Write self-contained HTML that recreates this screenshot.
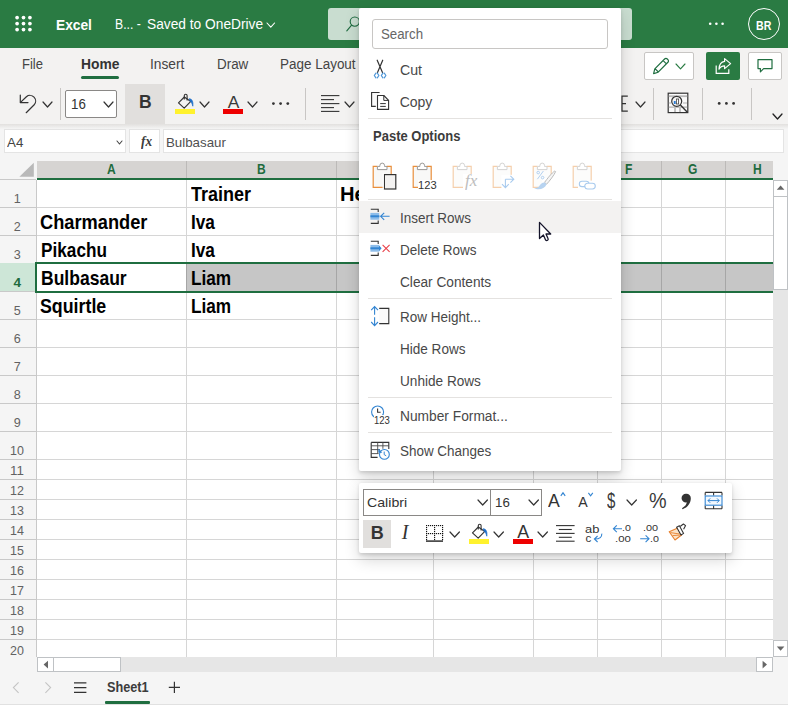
<!DOCTYPE html>
<html lang="en"><head><meta charset="utf-8"><title>Excel</title>
<style>
html,body{margin:0;padding:0}
body{width:788px;height:705px;overflow:hidden;position:relative;background:#f3f2f1;font-family:"Liberation Sans",sans-serif}
div,svg,span.t,b.t,i.t{position:absolute}
.t{white-space:pre;margin:0;padding:0;transform-origin:0 50%}
svg{overflow:visible}
</style></head><body>
<div style="left:0px;top:0px;width:788px;height:48px;background:#2a7b43"></div>
<svg style="left:0px;top:0px;" width="48" height="48" viewBox="0 0 48 48"><circle cx="17.1" cy="17.6" r="1.85" fill="#fff"/><circle cx="23.5" cy="17.6" r="1.85" fill="#fff"/><circle cx="29.9" cy="17.6" r="1.85" fill="#fff"/><circle cx="17.1" cy="23.6" r="1.85" fill="#fff"/><circle cx="23.5" cy="23.6" r="1.85" fill="#fff"/><circle cx="29.9" cy="23.6" r="1.85" fill="#fff"/><circle cx="17.1" cy="29.6" r="1.85" fill="#fff"/><circle cx="23.5" cy="29.6" r="1.85" fill="#fff"/><circle cx="29.9" cy="29.6" r="1.85" fill="#fff"/></svg>
<span class="t" style="left:55.89px;top:16px;font-size:15.5px;line-height:17px;color:#fff;transform:scaleX(0.8868);font-weight:700;">Excel</span>
<span class="t" style="left:115.39px;top:16px;font-size:14px;line-height:16px;color:#fff;transform:scaleX(0.8727);">B... -</span>
<span class="t" style="left:147.11px;top:16px;font-size:14px;line-height:16px;color:#fff;transform:scaleX(0.9814);">Saved to OneDrive</span>
<svg style="left:266.4px;top:21.7px;" width="9.6" height="6.2" viewBox="0 0 9.6 6.2"><polyline points="1,1 4.8,5.2 8.6,1" fill="none" stroke="#fff" stroke-width="1.1" stroke-linecap="round" stroke-linejoin="round"/></svg>
<div style="left:328px;top:8px;width:304px;height:32px;background:#c9ddd0;border-radius:3px"></div>
<svg style="left:344px;top:14px;" width="18" height="20" viewBox="0 0 18 20"><circle cx="10.8" cy="7.6" r="4.6" fill="none" stroke="#1e6b40" stroke-width="1.15"/><line x1="7.6" y1="11.2" x2="2.8" y2="16.8" stroke="#1e6b40" stroke-width="1.15" stroke-linecap="round"/></svg>
<svg style="left:700px;top:16px;" width="32" height="16" viewBox="0 0 32 16"><circle cx="10.2" cy="7.8" r="1.3" fill="#fff"/><circle cx="16.4" cy="7.8" r="1.3" fill="#fff"/><circle cx="22.6" cy="7.8" r="1.3" fill="#fff"/></svg>
<div style="left:748px;top:8px;width:32px;height:32px;border:1px solid #fff;border-radius:50%;box-sizing:border-box"></div>
<span class="t" style="left:756.48px;top:19px;font-size:12.6px;line-height:14px;color:#fff;transform:scaleX(0.8436);font-weight:700;">BR</span>
<div style="left:0px;top:48px;width:788px;height:76px;background:#f3f2f1"></div>
<span class="t" style="left:22.15px;top:56px;font-size:14px;line-height:16px;color:#444;transform:scaleX(0.9307);">File</span>
<span class="t" style="left:80.79px;top:56px;font-size:14px;line-height:16px;color:#333;transform:scaleX(0.9880);font-weight:700;">Home</span>
<span class="t" style="left:150.31px;top:56px;font-size:14px;line-height:16px;color:#444;transform:scaleX(0.9824);">Insert</span>
<span class="t" style="left:216.83px;top:56px;font-size:14px;line-height:16px;color:#444;transform:scaleX(0.9580);">Draw</span>
<span class="t" style="left:280.13px;top:56px;font-size:14px;line-height:16px;color:#444;transform:scaleX(0.9615);">Page Layout</span>
<div style="left:81px;top:76px;width:38px;height:3px;background:#1f6e40;border-radius:1.5px"></div>
<div style="left:644px;top:52px;width:50px;height:28px;background:#fff;border:1px solid #c8c6c4;border-radius:2px;box-sizing:border-box"></div>
<svg style="left:651px;top:56px;" width="20" height="20" viewBox="0 0 20 20"><path d="M2.6 17.6 L3.8 12.8 L13.6 3 a1.9 1.9 0 0 1 2.7 0 l0.6 0.6 a1.9 1.9 0 0 1 0 2.7 L7.2 16.2 Z M12.2 4.6 l3.2 3.2 M4 12.6 L7.4 16" fill="none" stroke="#1f6e40" stroke-width="1.2" stroke-linejoin="round"/></svg>
<svg style="left:674.9px;top:63.1px;" width="11" height="6.8" viewBox="0 0 11 6.8"><polyline points="1,1 5.5,5.8 10,1" fill="none" stroke="#2a7b43" stroke-width="1.1" stroke-linecap="round" stroke-linejoin="round"/></svg>
<div style="left:706px;top:52px;width:34px;height:28px;background:#2a7b43;border-radius:2px"></div>
<svg style="left:713px;top:56px;" width="20" height="20" viewBox="0 0 20 20"><path d="M3.2 9.4 V17.4 H15.8 V13.2" fill="none" stroke="#fff" stroke-width="1.2" stroke-linejoin="miter"/><path d="M11.6 2.6 L17.6 7.6 L11.6 12.6 V9.8 C9 9.8 7.2 10.8 6 13.2 C6.2 8.8 8.2 5.8 11.6 5.4 Z" fill="none" stroke="#fff" stroke-width="1.2" stroke-linejoin="round"/></svg>
<div style="left:748px;top:52px;width:34px;height:28px;background:#fff;border:1px solid #c8c6c4;border-radius:2px;box-sizing:border-box"></div>
<svg style="left:755px;top:56px;" width="20" height="20" viewBox="0 0 20 20"><path d="M3 3.6 H17 V12.6 H8.6 L5.4 15.8 V12.6 H3 Z" fill="none" stroke="#1f6e40" stroke-width="1.2" stroke-linejoin="round"/></svg>
<svg style="left:14px;top:88px;" width="26" height="28" viewBox="0 0 26 28"><path d="M6.3 7 V14.6 H14" fill="none" stroke="#333" stroke-width="1.2" stroke-linecap="round" stroke-linejoin="round"/><path d="M6.5 14.4 L12.4 8.8 A5.6 5.6 0 0 1 20.2 16.8 L12.2 24.7" fill="none" stroke="#333" stroke-width="1.2" stroke-linecap="round" stroke-linejoin="round"/></svg>
<svg style="left:42px;top:101px;" width="11" height="7" viewBox="0 0 11 7"><polyline points="1,1 5.5,6 10,1" fill="none" stroke="#333" stroke-width="1.2" stroke-linecap="round" stroke-linejoin="round"/></svg>
<div style="left:60px;top:88px;width:1px;height:32px;background:#c8c6c4"></div>
<div style="left:65px;top:90px;width:52px;height:28px;background:#fff;border:1px solid #8a8886;border-radius:2px;box-sizing:border-box"></div>
<span class="t" style="left:70.53px;top:96px;font-size:14px;line-height:16px;color:#333;transform:scaleX(0.9501);">16</span>
<svg style="left:102.7px;top:101.3px;" width="11" height="7" viewBox="0 0 11 7"><polyline points="1,1 5.5,6 10,1" fill="none" stroke="#333" stroke-width="1.2" stroke-linecap="round" stroke-linejoin="round"/></svg>
<div style="left:125px;top:84px;width:40px;height:40px;background:#e1dfdd"></div>
<span class="t" style="left:138.88px;top:92px;font-size:17.5px;line-height:20px;color:#333;font-weight:700;">B</span>
<svg style="left:175.6px;top:92px;" width="20" height="18" viewBox="0 0 20 18"><path d="M8.3 5 L2.5 10.8 L8.2 16.2 L14.8 9.4 Z" fill="none" stroke="#333" stroke-width="1.15" stroke-linejoin="round"/><path d="M8.3 7.4 V3.6 a1.4 1.4 0 0 1 2.8 0 V8.6" fill="none" stroke="#333" stroke-width="1.1"/><path d="M13 6.8 C16.2 6.6 17.4 10 16.8 14.2 C16.2 11.8 15.6 10.6 14.2 9.2 Z" fill="#1e6fc8" stroke="#1e6fc8" stroke-width="0.7" stroke-linejoin="round"/></svg>
<div style="left:175px;top:109px;width:20px;height:5px;background:#fff22e"></div>
<svg style="left:199.3px;top:101.3px;" width="11" height="7" viewBox="0 0 11 7"><polyline points="1,1 5.5,6 10,1" fill="none" stroke="#333" stroke-width="1.2" stroke-linecap="round" stroke-linejoin="round"/></svg>
<span class="t" style="left:227.70px;top:92px;font-size:17.4px;line-height:20px;color:#3a3a3a;">A</span>
<div style="left:223px;top:109px;width:20px;height:5px;background:#ee0000"></div>
<svg style="left:247.3px;top:101.3px;" width="11" height="7" viewBox="0 0 11 7"><polyline points="1,1 5.5,6 10,1" fill="none" stroke="#333" stroke-width="1.2" stroke-linecap="round" stroke-linejoin="round"/></svg>
<svg style="left:268px;top:98px;" width="26" height="12" viewBox="0 0 26 12"><circle cx="5.4" cy="5.6" r="1.4" fill="#333"/><circle cx="12.6" cy="5.6" r="1.4" fill="#333"/><circle cx="19.8" cy="5.6" r="1.4" fill="#333"/></svg>
<div style="left:305px;top:88px;width:1px;height:32px;background:#c8c6c4"></div>
<svg style="left:320.6px;top:95px;" width="19" height="18" viewBox="0 0 19 18"><line x1="0" y1="0.6" x2="18.4" y2="0.6" stroke="#333" stroke-width="1.1"/><line x1="0" y1="4.6" x2="13" y2="4.6" stroke="#333" stroke-width="1.1"/><line x1="0" y1="8.6" x2="18.4" y2="8.6" stroke="#333" stroke-width="1.1"/><line x1="0" y1="12.6" x2="13" y2="12.6" stroke="#333" stroke-width="1.1"/><line x1="0" y1="16.4" x2="18.4" y2="16.4" stroke="#333" stroke-width="1.1"/></svg>
<svg style="left:343.9px;top:101.3px;" width="11" height="7" viewBox="0 0 11 7"><polyline points="1,1 5.5,6 10,1" fill="none" stroke="#333" stroke-width="1.2" stroke-linecap="round" stroke-linejoin="round"/></svg>
<svg style="left:620px;top:94px;" width="10" height="20" viewBox="0 0 10 20"><path d="M7.8 2.2 H2 V17.2 H7.8 M2 9.7 H6" fill="none" stroke="#333" stroke-width="1.2"/></svg>
<svg style="left:635.3px;top:101.3px;" width="11" height="7" viewBox="0 0 11 7"><polyline points="1,1 5.5,6 10,1" fill="none" stroke="#333" stroke-width="1.2" stroke-linecap="round" stroke-linejoin="round"/></svg>
<div style="left:653px;top:88px;width:1px;height:32px;background:#c8c6c4"></div>
<svg style="left:667px;top:92px;" width="22" height="22" viewBox="0 0 22 22"><rect x="1.2" y="1.2" width="19.6" height="19.4" fill="#fafafa" stroke="#333" stroke-width="1.2"/><path d="M1.8 4.2 H20.2" stroke="#b8b8b8" stroke-width="1.8"/><path d="M1.8 15.2 H20.2 M1.8 11 H4 M16 11 H20" stroke="#b0b0b0" stroke-width="1.2"/><path d="M8 16 V20 M13 16 V20" stroke="#8a8a8a" stroke-width="1"/><circle cx="9.7" cy="9.3" r="5" fill="#f6f6f6" stroke="#333" stroke-width="1.2"/><rect x="6.8" y="9" width="1.9" height="3" fill="#2b7cd3"/><rect x="9.4" y="7" width="2.2" height="5" fill="#fff" stroke="#444" stroke-width="0.8"/><line x1="13.4" y1="13" x2="20.6" y2="20.6" stroke="#333" stroke-width="1.4"/></svg>
<div style="left:702px;top:88px;width:1px;height:32px;background:#c8c6c4"></div>
<svg style="left:713px;top:98px;" width="26" height="12" viewBox="0 0 26 12"><circle cx="6.2" cy="5.4" r="1.4" fill="#333"/><circle cx="13.4" cy="5.4" r="1.4" fill="#333"/><circle cx="20.6" cy="5.4" r="1.4" fill="#333"/></svg>
<div style="left:751px;top:88px;width:1px;height:32px;background:#c8c6c4"></div>
<svg style="left:771.9px;top:113px;" width="11" height="7" viewBox="0 0 11 7"><polyline points="1,1 5.5,6 10,1" fill="none" stroke="#222" stroke-width="1.3" stroke-linecap="round" stroke-linejoin="round"/></svg>
<div style="left:0px;top:124px;width:788px;height:37px;background:#f5f5f5"></div>
<div style="left:0px;top:124px;width:788px;height:5px;background:linear-gradient(#e2e0de,#f5f5f5)"></div>
<div style="left:4px;top:129px;width:122px;height:24px;background:#fff;border:1px solid #e4e4e4;box-sizing:border-box"></div>
<span class="t" style="left:6.73px;top:135px;font-size:13px;line-height:15px;color:#444;transform:scaleX(1.0248);">A4</span>
<svg style="left:116.3px;top:139.5px;" width="7" height="5" viewBox="0 0 7 5"><polyline points="1,1 3.5,4 6,1" fill="none" stroke="#444" stroke-width="1.1" stroke-linecap="round" stroke-linejoin="round"/></svg>
<div style="left:129px;top:129px;width:31px;height:24px;background:#fff;border:1px solid #e4e4e4;box-sizing:border-box"></div>
<span class="t" style="left:140.60px;top:133px;font-size:14.4px;line-height:16px;color:#3c3c3c;transform:scaleX(0.9220);font-weight:700;font-style:italic;font-family:'Liberation Serif', serif;">fx</span>
<div style="left:163px;top:129px;width:621px;height:24px;background:#fff;border:1px solid #e4e4e4;box-sizing:border-box"></div>
<span class="t" style="left:165.93px;top:135px;font-size:13px;line-height:15px;color:#505050;transform:scaleX(1.0231);">Bulbasaur</span>
<div style="left:37px;top:180px;width:736px;height:477px;background:#fff"></div>
<div style="left:0px;top:161px;width:37px;height:496px;background:#f5f5f5"></div>
<div style="left:36px;top:180px;width:1px;height:477px;background:#c9c9c9"></div>
<div style="left:0px;top:179px;width:36px;height:1px;background:#c9c9c9"></div>
<div style="left:37px;top:161px;width:736px;height:17px;background:#d6d4d2"></div>
<div style="left:37px;top:178px;width:736px;height:2px;background:#1f6e40"></div>
<svg style="left:19px;top:162px;" width="16" height="16" viewBox="0 0 16 16"><path d="M14.8 0.8 V14.8 H0.4 Z" fill="#b9b9b9"/></svg>
<div style="left:186px;top:161px;width:1px;height:17px;background:#bcbab8"></div>
<div style="left:336px;top:161px;width:1px;height:17px;background:#bcbab8"></div>
<div style="left:433px;top:161px;width:1px;height:17px;background:#bcbab8"></div>
<div style="left:533px;top:161px;width:1px;height:17px;background:#bcbab8"></div>
<div style="left:597px;top:161px;width:1px;height:17px;background:#bcbab8"></div>
<div style="left:661px;top:161px;width:1px;height:17px;background:#bcbab8"></div>
<div style="left:725px;top:161px;width:1px;height:17px;background:#bcbab8"></div>
<span class="t" style="left:107.15px;top:161px;font-size:14px;line-height:16px;color:#1e6b3e;transform:scaleX(0.8600);font-weight:700;">A</span>
<span class="t" style="left:256.65px;top:161px;font-size:14px;line-height:16px;color:#1e6b3e;transform:scaleX(0.8600);font-weight:700;">B</span>
<span class="t" style="left:380.15px;top:161px;font-size:14px;line-height:16px;color:#1e6b3e;transform:scaleX(0.8600);font-weight:700;">C</span>
<span class="t" style="left:478.65px;top:161px;font-size:14px;line-height:16px;color:#1e6b3e;transform:scaleX(0.8600);font-weight:700;">D</span>
<span class="t" style="left:560.98px;top:161px;font-size:14px;line-height:16px;color:#1e6b3e;transform:scaleX(0.8600);font-weight:700;">E</span>
<span class="t" style="left:625.32px;top:161px;font-size:14px;line-height:16px;color:#1e6b3e;transform:scaleX(0.8600);font-weight:700;">F</span>
<span class="t" style="left:688.32px;top:161px;font-size:14px;line-height:16px;color:#1e6b3e;transform:scaleX(0.8600);font-weight:700;">G</span>
<span class="t" style="left:752.85px;top:161px;font-size:14px;line-height:16px;color:#1e6b3e;transform:scaleX(0.8600);font-weight:700;">H</span>
<div style="left:187px;top:264px;width:586px;height:27px;background:#c6c6c6"></div>
<div style="left:0px;top:207px;width:36px;height:1px;background:#c9c9c9"></div>
<div style="left:37px;top:207px;width:736px;height:1px;background:#d6d6d6"></div>
<div style="left:0px;top:235px;width:36px;height:1px;background:#c9c9c9"></div>
<div style="left:37px;top:235px;width:736px;height:1px;background:#d6d6d6"></div>
<div style="left:0px;top:263px;width:36px;height:1px;background:#c9c9c9"></div>
<div style="left:37px;top:263px;width:736px;height:1px;background:#d6d6d6"></div>
<div style="left:0px;top:291px;width:36px;height:1px;background:#c9c9c9"></div>
<div style="left:37px;top:291px;width:736px;height:1px;background:#d6d6d6"></div>
<div style="left:0px;top:319px;width:36px;height:1px;background:#c9c9c9"></div>
<div style="left:37px;top:319px;width:736px;height:1px;background:#d6d6d6"></div>
<div style="left:0px;top:347px;width:36px;height:1px;background:#c9c9c9"></div>
<div style="left:37px;top:347px;width:736px;height:1px;background:#d6d6d6"></div>
<div style="left:0px;top:375px;width:36px;height:1px;background:#c9c9c9"></div>
<div style="left:37px;top:375px;width:736px;height:1px;background:#d6d6d6"></div>
<div style="left:0px;top:403px;width:36px;height:1px;background:#c9c9c9"></div>
<div style="left:37px;top:403px;width:736px;height:1px;background:#d6d6d6"></div>
<div style="left:0px;top:431px;width:36px;height:1px;background:#c9c9c9"></div>
<div style="left:37px;top:431px;width:736px;height:1px;background:#d6d6d6"></div>
<div style="left:0px;top:459px;width:36px;height:1px;background:#c9c9c9"></div>
<div style="left:37px;top:459px;width:736px;height:1px;background:#d6d6d6"></div>
<div style="left:0px;top:479px;width:36px;height:1px;background:#c9c9c9"></div>
<div style="left:37px;top:479px;width:736px;height:1px;background:#d6d6d6"></div>
<div style="left:0px;top:499px;width:36px;height:1px;background:#c9c9c9"></div>
<div style="left:37px;top:499px;width:736px;height:1px;background:#d6d6d6"></div>
<div style="left:0px;top:519px;width:36px;height:1px;background:#c9c9c9"></div>
<div style="left:37px;top:519px;width:736px;height:1px;background:#d6d6d6"></div>
<div style="left:0px;top:539px;width:36px;height:1px;background:#c9c9c9"></div>
<div style="left:37px;top:539px;width:736px;height:1px;background:#d6d6d6"></div>
<div style="left:0px;top:559px;width:36px;height:1px;background:#c9c9c9"></div>
<div style="left:37px;top:559px;width:736px;height:1px;background:#d6d6d6"></div>
<div style="left:0px;top:579px;width:36px;height:1px;background:#c9c9c9"></div>
<div style="left:37px;top:579px;width:736px;height:1px;background:#d6d6d6"></div>
<div style="left:0px;top:599px;width:36px;height:1px;background:#c9c9c9"></div>
<div style="left:37px;top:599px;width:736px;height:1px;background:#d6d6d6"></div>
<div style="left:0px;top:619px;width:36px;height:1px;background:#c9c9c9"></div>
<div style="left:37px;top:619px;width:736px;height:1px;background:#d6d6d6"></div>
<div style="left:0px;top:639px;width:36px;height:1px;background:#c9c9c9"></div>
<div style="left:37px;top:639px;width:736px;height:1px;background:#d6d6d6"></div>
<div style="left:186px;top:180px;width:1px;height:477px;background:#d6d6d6"></div>
<div style="left:186px;top:264px;width:1px;height:27px;background:#a6a6a6"></div>
<div style="left:336px;top:180px;width:1px;height:477px;background:#d6d6d6"></div>
<div style="left:336px;top:264px;width:1px;height:27px;background:#a6a6a6"></div>
<div style="left:433px;top:180px;width:1px;height:477px;background:#d6d6d6"></div>
<div style="left:433px;top:264px;width:1px;height:27px;background:#a6a6a6"></div>
<div style="left:533px;top:180px;width:1px;height:477px;background:#d6d6d6"></div>
<div style="left:533px;top:264px;width:1px;height:27px;background:#a6a6a6"></div>
<div style="left:597px;top:180px;width:1px;height:477px;background:#d6d6d6"></div>
<div style="left:597px;top:264px;width:1px;height:27px;background:#a6a6a6"></div>
<div style="left:661px;top:180px;width:1px;height:477px;background:#d6d6d6"></div>
<div style="left:661px;top:264px;width:1px;height:27px;background:#a6a6a6"></div>
<div style="left:725px;top:180px;width:1px;height:477px;background:#d6d6d6"></div>
<div style="left:725px;top:264px;width:1px;height:27px;background:#a6a6a6"></div>
<div style="left:0px;top:263px;width:35px;height:28px;background:#cde6d7"></div>
<span class="t" style="left:13.79px;top:192px;font-size:12.6px;line-height:14px;color:#626262;">1</span>
<span class="t" style="left:13.79px;top:220px;font-size:12.6px;line-height:14px;color:#626262;">2</span>
<span class="t" style="left:13.79px;top:248px;font-size:12.6px;line-height:14px;color:#626262;">3</span>
<span class="t" style="left:13.42px;top:275px;font-size:13.6px;line-height:15px;color:#1e6b3e;font-weight:700;">4</span>
<span class="t" style="left:13.79px;top:304px;font-size:12.6px;line-height:14px;color:#626262;">5</span>
<span class="t" style="left:13.79px;top:332px;font-size:12.6px;line-height:14px;color:#626262;">6</span>
<span class="t" style="left:13.79px;top:360px;font-size:12.6px;line-height:14px;color:#626262;">7</span>
<span class="t" style="left:13.79px;top:388px;font-size:12.6px;line-height:14px;color:#626262;">8</span>
<span class="t" style="left:13.79px;top:416px;font-size:12.6px;line-height:14px;color:#626262;">9</span>
<span class="t" style="left:10.38px;top:444px;font-size:12.6px;line-height:14px;color:#626262;transform:scaleX(0.9889);">10</span>
<span class="t" style="left:10.33px;top:464px;font-size:12.6px;line-height:14px;color:#626262;transform:scaleX(1.0598);">11</span>
<span class="t" style="left:10.38px;top:484px;font-size:12.6px;line-height:14px;color:#626262;transform:scaleX(0.9889);">12</span>
<span class="t" style="left:10.38px;top:504px;font-size:12.6px;line-height:14px;color:#626262;transform:scaleX(0.9889);">13</span>
<span class="t" style="left:10.38px;top:524px;font-size:12.6px;line-height:14px;color:#626262;transform:scaleX(0.9889);">14</span>
<span class="t" style="left:10.38px;top:544px;font-size:12.6px;line-height:14px;color:#626262;transform:scaleX(0.9889);">15</span>
<span class="t" style="left:10.38px;top:564px;font-size:12.6px;line-height:14px;color:#626262;transform:scaleX(0.9889);">16</span>
<span class="t" style="left:10.38px;top:584px;font-size:12.6px;line-height:14px;color:#626262;transform:scaleX(0.9889);">17</span>
<span class="t" style="left:10.38px;top:604px;font-size:12.6px;line-height:14px;color:#626262;transform:scaleX(0.9889);">18</span>
<span class="t" style="left:10.38px;top:624px;font-size:12.6px;line-height:14px;color:#626262;transform:scaleX(0.9889);">19</span>
<span class="t" style="left:10.38px;top:644px;font-size:12.6px;line-height:14px;color:#626262;transform:scaleX(0.9889);">20</span>
<span class="t" style="left:191.06px;top:184px;font-size:19.3px;line-height:21px;color:#000;transform:scaleX(0.9323);font-weight:700;">Trainer</span>
<span class="t" style="left:340.00px;top:184px;font-size:19.3px;line-height:21px;color:#000;transform:scaleX(1.0429);font-weight:700;">Height</span>
<span class="t" style="left:40.35px;top:212px;font-size:19.3px;line-height:21px;color:#000;transform:scaleX(0.9460);font-weight:700;">Charmander</span>
<span class="t" style="left:190.88px;top:212px;font-size:19.3px;line-height:21px;color:#000;transform:scaleX(0.8935);font-weight:700;">Iva</span>
<span class="t" style="left:40.68px;top:240px;font-size:19.3px;line-height:21px;color:#000;transform:scaleX(0.8919);font-weight:700;">Pikachu</span>
<span class="t" style="left:190.88px;top:240px;font-size:19.3px;line-height:21px;color:#000;transform:scaleX(0.8935);font-weight:700;">Iva</span>
<span class="t" style="left:40.77px;top:268px;font-size:19.3px;line-height:21px;color:#000;transform:scaleX(0.9084);font-weight:700;">Bulbasaur</span>
<span class="t" style="left:190.88px;top:268px;font-size:19.3px;line-height:21px;color:#000;transform:scaleX(0.8921);font-weight:700;">Liam</span>
<span class="t" style="left:40.37px;top:296px;font-size:19.3px;line-height:21px;color:#000;transform:scaleX(0.9231);font-weight:700;">Squirtle</span>
<span class="t" style="left:190.88px;top:296px;font-size:19.3px;line-height:21px;color:#000;transform:scaleX(0.8921);font-weight:700;">Liam</span>
<div style="left:35px;top:262px;width:755px;height:31px;border:2px solid #1f6e40;box-sizing:border-box"></div>
<div style="left:773px;top:161px;width:15px;height:19px;background:#f5f5f5"></div>
<div style="left:773px;top:180px;width:15px;height:477px;background:#e6e6e6"></div>
<div style="left:773px;top:180px;width:15px;height:17px;background:#fff;border:1px solid #bfc2c5;box-sizing:border-box"></div>
<svg style="left:773px;top:180px;" width="15" height="17" viewBox="0 0 15 17"><path d="M3.8 9.8 L7.6 5.6 L11.4 9.8 Z" fill="#666"/></svg>
<div style="left:773px;top:196px;width:15px;height:94px;background:#fff;border:1px solid #bfc2c5;box-sizing:border-box"></div>
<div style="left:773px;top:640px;width:15px;height:17px;background:#fff;border:1px solid #bfc2c5;box-sizing:border-box"></div>
<svg style="left:773px;top:640px;" width="15" height="17" viewBox="0 0 15 17"><path d="M3.8 6.6 L11.4 6.6 L7.6 10.8 Z" fill="#666"/></svg>
<div style="left:0px;top:657px;width:788px;height:15px;background:#f5f5f5"></div>
<div style="left:37px;top:657px;width:720px;height:15px;background:#e6e6e6"></div>
<div style="left:37px;top:657px;width:17px;height:15px;background:#fff;border:1px solid #bfc2c5;box-sizing:border-box"></div>
<svg style="left:37px;top:657px;" width="17" height="15" viewBox="0 0 17 15"><path d="M11 3.8 L11 11.4 L6.6 7.6 Z" fill="#666"/></svg>
<div style="left:53px;top:657px;width:68px;height:15px;background:#fff;border:1px solid #bfc2c5;box-sizing:border-box"></div>
<div style="left:756px;top:657px;width:17px;height:15px;background:#fff;border:1px solid #bfc2c5;box-sizing:border-box"></div>
<svg style="left:756px;top:657px;" width="17" height="15" viewBox="0 0 17 15"><path d="M6.6 3.8 L6.6 11.4 L11 7.6 Z" fill="#666"/></svg>
<div style="left:0px;top:672px;width:788px;height:33px;background:#f5f5f5"></div>
<div style="left:0px;top:704px;width:788px;height:1px;background:#e1e1e1"></div>
<svg style="left:10px;top:680px;" width="12" height="16" viewBox="0 0 12 16"><polyline points="8.6,2.4 3.4,7.6 8.6,12.8" fill="none" stroke="#c4c4c4" stroke-width="1.1"/></svg>
<svg style="left:42px;top:680px;" width="12" height="16" viewBox="0 0 12 16"><polyline points="3.4,2.4 8.6,7.6 3.4,12.8" fill="none" stroke="#c4c4c4" stroke-width="1.1"/></svg>
<svg style="left:73px;top:681px;" width="14" height="13" viewBox="0 0 14 13"><path d="M1 1.8 H13.4 M1 6.6 H13.4 M1 11.4 H13.4" stroke="#333" stroke-width="1.2" fill="none"/></svg>
<span class="t" style="left:107.22px;top:679px;font-size:14px;line-height:16px;color:#3c3c3c;transform:scaleX(0.9068);font-weight:700;">Sheet1</span>
<svg style="left:168px;top:681px;" width="13" height="13" viewBox="0 0 13 13"><path d="M6.4 0.8 V12 M0.8 6.4 H12" stroke="#333" stroke-width="1.2" fill="none"/></svg>
<div style="left:105px;top:701px;width:45px;height:3px;background:#1f6e40;border-radius:1px"></div>
<div style="left:359px;top:8px;width:262px;height:462.8px;background:#fff;border-radius:2px;box-shadow:0 6.4px 14.4px rgba(0,0,0,.16),0 1.2px 3.6px rgba(0,0,0,.13)"></div>
<div style="left:372px;top:19px;width:236px;height:29.5px;background:#fff;border:1px solid #c8c6c4;border-radius:3px;box-sizing:border-box"></div>
<span class="t" style="left:380.54px;top:26px;font-size:14px;line-height:16px;color:#666;transform:scaleX(0.9468);">Search</span>
<div style="left:359px;top:201px;width:262px;height:31.6px;background:#f3f2f1"></div>
<div style="left:368px;top:118px;width:244px;height:1px;background:#e4e2e0"></div>
<div style="left:368px;top:199px;width:244px;height:1px;background:#e4e2e0"></div>
<div style="left:368px;top:298px;width:244px;height:1px;background:#e4e2e0"></div>
<div style="left:368px;top:397px;width:244px;height:1px;background:#e4e2e0"></div>
<div style="left:368px;top:432px;width:244px;height:1px;background:#e4e2e0"></div>
<svg style="left:372px;top:59px;" width="18" height="21" viewBox="0 0 18 21"><path d="M5.2 1.2 L10.6 13.8 M10.7 1.2 L5.4 13.8" stroke="#333" stroke-width="1.2" fill="none" stroke-linecap="round"/><path d="M3.9 14.2 L2.3 16.5 L3.9 18.8 M5.3 14.2 L6.9 16.5 L5.3 18.8 M10.9 14.2 L9.3 16.5 L10.9 18.8 M12.3 14.2 L13.9 16.5 L12.3 18.8" fill="none" stroke="#4f97d8" stroke-width="1.2" stroke-linejoin="round" stroke-linecap="round"/></svg>
<span class="t" style="left:399.69px;top:62px;font-size:14px;line-height:16px;color:#484848;transform:scaleX(1.0093);">Cut</span>
<svg style="left:370px;top:91px;" width="21" height="20" viewBox="0 0 21 20"><path d="M9.6 1.5 H1.6 V15.4 H5.8" fill="#fafafa" stroke="#333" stroke-width="1.1"/><path d="M7.5 4.5 H13.8 L18.6 9.4 V18.4 H7.5 Z" fill="#fff" stroke="#333" stroke-width="1.1" stroke-linejoin="round"/><path d="M13.8 4.5 V9.4 H18.6 M10.2 12.6 H15.8 M10.2 15.4 H15.8" fill="none" stroke="#333" stroke-width="1"/></svg>
<span class="t" style="left:399.70px;top:94px;font-size:14px;line-height:16px;color:#484848;">Copy</span>
<span class="t" style="left:372.51px;top:128px;font-size:14px;line-height:16px;color:#3c3c3c;transform:scaleX(0.9288);font-weight:700;">Paste Options</span>
<svg style="left:372.2px;top:161.6px;" width="28" height="30" viewBox="0 0 28 30"><g opacity="1"><path d="M5.4 4.4 H1.2 V25.4 H19.2 V4.4 H15" fill="#f8f8f7" stroke="#e98f3c" stroke-width="1.2"/><path d="M5.4 7.6 V4.4 H7.9 V3.4 a2.3 2.3 0 0 1 4.6 0 V4.4 H15 V7.6 Z" fill="#fff" stroke="#9a9896" stroke-width="1"/></g></svg>
<svg style="left:372.2px;top:161.6px;" width="28" height="30" viewBox="0 0 28 30"><rect x="12.4" y="12.6" width="11.4" height="14.4" fill="#f3f2f1" stroke="#333" stroke-width="1.2"/><rect x="10.6" y="10.8" width="1.2" height="15.2" fill="#fff"/><rect x="10.6" y="26" width="1.2" height="1.4" fill="#fff"/></svg>
<svg style="left:412.2px;top:161.6px;" width="28" height="30" viewBox="0 0 28 30"><g opacity="1"><path d="M5.4 4.4 H1.2 V25.4 H19.2 V4.4 H15" fill="#f8f8f7" stroke="#e98f3c" stroke-width="1.2"/><path d="M5.4 7.6 V4.4 H7.9 V3.4 a2.3 2.3 0 0 1 4.6 0 V4.4 H15 V7.6 Z" fill="#fff" stroke="#9a9896" stroke-width="1"/></g></svg>
<div style="left:417.6px;top:179.6px;width:19.4px;height:10.8px;background:#fff"></div>
<span class="t" style="left:418.04px;top:180px;font-size:10.4px;line-height:11px;color:#333;transform:scaleX(1.0747);">123</span>
<svg style="left:452.2px;top:161.6px;" width="28" height="30" viewBox="0 0 28 30"><g opacity="0.42"><path d="M5.4 4.4 H1.2 V25.4 H19.2 V4.4 H15" fill="#f8f8f7" stroke="#e98f3c" stroke-width="1.2"/><path d="M5.4 7.6 V4.4 H7.9 V3.4 a2.3 2.3 0 0 1 4.6 0 V4.4 H15 V7.6 Z" fill="#fff" stroke="#9a9896" stroke-width="1"/></g></svg>
<div style="left:463.4px;top:174px;width:14.6px;height:16.4px;background:#fff"></div>
<span class="t" style="left:464.95px;top:171px;font-size:16.6px;line-height:19px;color:#bdbdbd;transform:scaleX(1.0230);font-style:italic;font-family:'Liberation Serif', serif;">fx</span>
<svg style="left:492.2px;top:161.6px;" width="28" height="30" viewBox="0 0 28 30"><g opacity="0.42"><path d="M5.4 4.4 H1.2 V25.4 H19.2 V4.4 H15" fill="#f8f8f7" stroke="#e98f3c" stroke-width="1.2"/><path d="M5.4 7.6 V4.4 H7.9 V3.4 a2.3 2.3 0 0 1 4.6 0 V4.4 H15 V7.6 Z" fill="#fff" stroke="#9a9896" stroke-width="1"/></g></svg>
<svg style="left:492.2px;top:161.6px;" width="30" height="30" viewBox="0 0 30 30"><rect x="9.4" y="12.8" width="14" height="14.6" fill="#fff"/><path d="M13.4 17.2 H21.6 M18.4 13.8 L21.8 17.2 L18.4 20.6 M13.4 17.2 V25.4 M10 22.2 L13.4 25.6 L16.8 22.2" fill="none" stroke="#a9cbee" stroke-width="1.1"/></svg>
<svg style="left:532.2px;top:161.6px;" width="28" height="30" viewBox="0 0 28 30"><g opacity="0.42"><path d="M5.4 4.4 H1.2 V25.4 H19.2 V4.4 H15" fill="#f8f8f7" stroke="#e98f3c" stroke-width="1.2"/><path d="M5.4 7.6 V4.4 H7.9 V3.4 a2.3 2.3 0 0 1 4.6 0 V4.4 H15 V7.6 Z" fill="#fff" stroke="#9a9896" stroke-width="1"/></g></svg>
<svg style="left:532.2px;top:161.6px;" width="32" height="30" viewBox="0 0 32 30"><rect x="10" y="16" width="13" height="12" fill="#fff"/><path d="M22.8 9 C20 10.6 14.8 17.2 12.6 20.4 L14.6 22.2 C17.2 19.4 22.4 12.8 23.6 9.6 Z" fill="#f6f6f6" stroke="#b4b4b4" stroke-width="0.9"/><path d="M12.6 20.4 C10.2 20.2 8.2 22 7 24.4 C5.6 25.8 3.6 26.2 2 26 C5.8 28.4 12.6 27.4 14.6 22.2 Z" fill="#b7d3f0"/><circle cx="6.2" cy="10.6" r="1.3" fill="none" stroke="#a9cbee" stroke-width="0.9"/><circle cx="10.6" cy="15.6" r="1.3" fill="none" stroke="#a9cbee" stroke-width="0.9"/><path d="M11.4 9 L5.4 17.2" stroke="#a9cbee" stroke-width="0.9"/></svg>
<svg style="left:572.2px;top:161.6px;" width="28" height="30" viewBox="0 0 28 30"><g opacity="0.42"><path d="M5.4 4.4 H1.2 V25.4 H19.2 V4.4 H15" fill="#f8f8f7" stroke="#e98f3c" stroke-width="1.2"/><path d="M5.4 7.6 V4.4 H7.9 V3.4 a2.3 2.3 0 0 1 4.6 0 V4.4 H15 V7.6 Z" fill="#fff" stroke="#9a9896" stroke-width="1"/></g></svg>
<svg style="left:572.2px;top:161.6px;" width="32" height="30" viewBox="0 0 32 30"><rect x="6" y="18.6" width="18" height="9.4" fill="#fff"/><path d="M13.2 24.6 H10 a2.7 2.7 0 0 1 0 -5.4 H14.4 a2.7 2.7 0 0 1 2.6 2" fill="none" stroke="#a9cbee" stroke-width="1.1"/><path d="M16.6 21.2 H20.4 a2.9 2.9 0 0 1 0 5.8 H15.6 a2.9 2.9 0 0 1 -2.8 -2.2 a2.9 2.9 0 0 1 2.8 -3.6 Z" fill="none" stroke="#a9cbee" stroke-width="1.1"/></svg>
<svg style="left:370.4px;top:208px;" width="22" height="17" viewBox="0 0 22 17"><path d="M0.8 1.2 H8.2 V4 M0.8 15.4 H8.2 V12.6" fill="none" stroke="#333" stroke-width="1.1"/><rect x="0.4" y="4.9" width="8.8" height="6.8" fill="#8dbdea"/><path d="M0.4 8.3 H9.4" stroke="#3385d2" stroke-width="2"/><path d="M10.6 8.3 H19.6 M14.2 4.8 L10.6 8.3 L14.2 11.8" fill="none" stroke="#3385d2" stroke-width="1.1"/></svg>
<span class="t" style="left:399.73px;top:210px;font-size:14px;line-height:16px;color:#484848;transform:scaleX(0.9605);">Insert Rows</span>
<svg style="left:370.4px;top:240px;" width="22" height="17" viewBox="0 0 22 17"><path d="M0.8 1.2 H8.2 V4 M0.8 15.4 H8.2 V12.6" fill="none" stroke="#333" stroke-width="1.1"/><rect x="0.4" y="4.9" width="8.8" height="6.8" fill="#8dbdea"/><path d="M0.4 8.3 H9.4" stroke="#3385d2" stroke-width="2"/><path d="M9 5.4 L11.6 8.3 L9 11.2 Z" fill="#3385d2"/><path d="M12.6 4.8 L19.6 11.8 M19.6 4.8 L12.6 11.8" fill="none" stroke="#e8414a" stroke-width="1.1"/></svg>
<span class="t" style="left:399.72px;top:242px;font-size:14px;line-height:16px;color:#484848;transform:scaleX(0.9650);">Delete Rows</span>
<span class="t" style="left:399.72px;top:274px;font-size:14px;line-height:16px;color:#484848;transform:scaleX(0.9765);">Clear Contents</span>
<svg style="left:369px;top:304px;" width="22" height="24" viewBox="0 0 22 24"><path d="M10.2 4.4 H19.8 V19.6 H10.2" fill="#fafafa" stroke="#333" stroke-width="1.1"/><path d="M5.6 2.8 V10.8 M5.6 13.2 V21.4 M2.2 6.2 L5.6 2.6 L9 6.2 M2.2 18 L5.6 21.6 L9 18" fill="none" stroke="#3385d2" stroke-width="1.1"/></svg>
<span class="t" style="left:399.73px;top:309px;font-size:14px;line-height:16px;color:#484848;transform:scaleX(0.9637);">Row Height...</span>
<span class="t" style="left:399.72px;top:341px;font-size:14px;line-height:16px;color:#484848;transform:scaleX(0.9675);">Hide Rows</span>
<span class="t" style="left:399.72px;top:373px;font-size:14px;line-height:16px;color:#484848;transform:scaleX(0.9716);">Unhide Rows</span>
<svg style="left:370px;top:404px;" width="22" height="22" viewBox="0 0 22 22"><circle cx="7.6" cy="8" r="6" fill="none" stroke="#3385d2" stroke-width="1.1"/><path d="M7.6 4.6 V8.2 H10.6" fill="none" stroke="#333" stroke-width="1.1"/></svg>
<div style="left:373.6px;top:415.2px;width:16.8px;height:9.4px;background:#fff"></div>
<span class="t" style="left:373.92px;top:414px;font-size:10.6px;line-height:12px;color:#333;transform:scaleX(0.8967);">123</span>
<span class="t" style="left:399.91px;top:408px;font-size:14px;line-height:16px;color:#484848;transform:scaleX(0.9827);">Number Format...</span>
<svg style="left:369px;top:440px;" width="24" height="22" viewBox="0 0 24 22"><path d="M2.2 2.4 H19.8 V9 M2.2 2.4 V17.4 H8.6" fill="none" stroke="#333" stroke-width="1.1"/><path d="M2.2 5.8 H19.8 M2.2 9.6 H11 M2.2 13.6 H9.6 M8.7 2.4 V13.6 M13.9 2.4 V8.8" fill="none" stroke="#4a4a4a" stroke-width="0.9"/><circle cx="15.4" cy="14.4" r="4.9" fill="#fff" stroke="#3385d2" stroke-width="1.1"/><path d="M15.2 11.6 V14.6 L17.2 15.8" fill="none" stroke="#3385d2" stroke-width="1"/><path d="M9.8 9.2 V12.4 H12.6 Z" fill="#3385d2" stroke="#3385d2" stroke-width="0.8" stroke-linejoin="round"/></svg>
<span class="t" style="left:399.93px;top:443px;font-size:14px;line-height:16px;color:#484848;transform:scaleX(0.9605);">Show Changes</span>
<svg style="left:536px;top:220px;" width="16" height="24" viewBox="0 0 16 24"><path d="M3.5 2.4 V18.6 L7.4 15 L9.6 20 Q10.5 20.9 11.6 20.3 Q12.5 19.7 12 18.6 L10 14 H14.7 Z" fill="#fff" stroke="#14142a" stroke-width="1.3" stroke-linejoin="round"/></svg>
<div style="left:359px;top:482.6px;width:372.6px;height:70.2px;background:#fff;border-radius:2px;box-shadow:0 6.4px 14.4px rgba(0,0,0,.16),0 1.2px 3.6px rgba(0,0,0,.13)"></div>
<div style="left:363.4px;top:488.5px;width:127.4px;height:27.1px;background:#fff;border:1px solid #8a8886;box-sizing:border-box"></div>
<div style="left:489.8px;top:488.5px;width:52.2px;height:27.1px;background:#fff;border:1px solid #8a8886;box-sizing:border-box"></div>
<span class="t" style="left:367.49px;top:495px;font-size:13.6px;line-height:15px;color:#333;transform:scaleX(1.0423);">Calibri</span>
<svg style="left:476.6px;top:498.9px;" width="11.4" height="7" viewBox="0 0 11.4 7"><polyline points="1,1 5.7,6 10.4,1" fill="none" stroke="#333" stroke-width="1.2" stroke-linecap="round" stroke-linejoin="round"/></svg>
<span class="t" style="left:495.24px;top:495px;font-size:13.6px;line-height:15px;color:#333;transform:scaleX(0.9759);">16</span>
<svg style="left:527.8px;top:498.9px;" width="11.4" height="7" viewBox="0 0 11.4 7"><polyline points="1,1 5.7,6 10.4,1" fill="none" stroke="#333" stroke-width="1.2" stroke-linecap="round" stroke-linejoin="round"/></svg>
<span class="t" style="left:547.71px;top:490px;font-size:18.6px;line-height:21px;color:#333;transform:scaleX(0.9500);">A</span>
<svg style="left:558.6px;top:490px;" width="9" height="8" viewBox="0 0 9 8"><polyline points="1.8,5.8 4,2.8 6.2,5.8" fill="none" stroke="#3385d2" stroke-width="1.1"/></svg>
<span class="t" style="left:578.17px;top:494px;font-size:14.2px;line-height:16px;color:#333;">A</span>
<svg style="left:586.8px;top:490px;" width="9" height="8" viewBox="0 0 9 8"><polyline points="1.4,2.8 3.6,5.8 5.8,2.8" fill="none" stroke="#3385d2" stroke-width="1.1"/></svg>
<span class="t" style="left:607.24px;top:488px;font-size:22px;line-height:25px;color:#3a3a3a;transform:scaleX(0.6800);">$</span>
<svg style="left:626px;top:499.1px;" width="11.4" height="7" viewBox="0 0 11.4 7"><polyline points="1,1 5.7,6 10.4,1" fill="none" stroke="#333" stroke-width="1.2" stroke-linecap="round" stroke-linejoin="round"/></svg>
<span class="t" style="left:648.80px;top:488px;font-size:22px;line-height:25px;color:#3a3a3a;transform:scaleX(0.9000);">%</span>
<svg style="left:679.8px;top:491.6px;" width="13" height="19.4" viewBox="0 0 12 18"><path d="M5.6 1.6 a4.1 4.1 0 0 1 4.4 4.3 C10 10.4 7.2 14.4 2.4 16 L1.8 15 C4.6 13.6 6.2 11.6 6.2 9.6 A4 4 0 0 1 1.4 5.8 A4.1 4.1 0 0 1 5.6 1.6 Z" fill="#333"/></svg>
<svg style="left:704px;top:491px;" width="20" height="20" viewBox="0 0 20 20"><path d="M1.2 1.4 H18 M1.2 17.8 H18 M1.2 1.4 V4.6 M18 1.4 V4.6 M1.2 17.8 V14.6 M18 17.8 V14.6 M9.6 1.4 V4.6 M9.6 14.6 V17.8" fill="none" stroke="#333" stroke-width="1.1"/><rect x="1.2" y="5" width="16.8" height="9.2" fill="#f2f8fe" stroke="#3385d2" stroke-width="1.1"/><path d="M4 9.6 H15.2 M6.2 7.4 L4 9.6 L6.2 11.8 M13 7.4 L15.2 9.6 L13 11.8" fill="none" stroke="#3385d2" stroke-width="1"/></svg>
<div style="left:363.4px;top:520.2px;width:27.6px;height:27.6px;background:#e1dfdd"></div>
<span class="t" style="left:370.70px;top:523px;font-size:18px;line-height:20px;color:#333;font-weight:700;">B</span>
<span class="t" style="left:401.86px;top:521px;font-size:20px;line-height:22px;color:#333;font-style:italic;font-family:'Liberation Serif', serif;">I</span>
<svg style="left:426px;top:525px;" width="18" height="18" viewBox="0 0 18 18"><rect x="0" y="0" width="1.15" height="1.15" fill="#111"/><rect x="0" y="8" width="1.15" height="1.15" fill="#111"/><rect x="2" y="0" width="1.15" height="1.15" fill="#111"/><rect x="2" y="8" width="1.15" height="1.15" fill="#111"/><rect x="4" y="0" width="1.15" height="1.15" fill="#111"/><rect x="4" y="8" width="1.15" height="1.15" fill="#111"/><rect x="6" y="0" width="1.15" height="1.15" fill="#111"/><rect x="6" y="8" width="1.15" height="1.15" fill="#111"/><rect x="8" y="0" width="1.15" height="1.15" fill="#111"/><rect x="8" y="8" width="1.15" height="1.15" fill="#111"/><rect x="10" y="0" width="1.15" height="1.15" fill="#111"/><rect x="10" y="8" width="1.15" height="1.15" fill="#111"/><rect x="12" y="0" width="1.15" height="1.15" fill="#111"/><rect x="12" y="8" width="1.15" height="1.15" fill="#111"/><rect x="14" y="0" width="1.15" height="1.15" fill="#111"/><rect x="14" y="8" width="1.15" height="1.15" fill="#111"/><rect x="16" y="0" width="1.15" height="1.15" fill="#111"/><rect x="16" y="8" width="1.15" height="1.15" fill="#111"/><rect x="0" y="2" width="1.15" height="1.15" fill="#111"/><rect x="8" y="2" width="1.15" height="1.15" fill="#111"/><rect x="16" y="2" width="1.15" height="1.15" fill="#111"/><rect x="0" y="4" width="1.15" height="1.15" fill="#111"/><rect x="8" y="4" width="1.15" height="1.15" fill="#111"/><rect x="16" y="4" width="1.15" height="1.15" fill="#111"/><rect x="0" y="6" width="1.15" height="1.15" fill="#111"/><rect x="8" y="6" width="1.15" height="1.15" fill="#111"/><rect x="16" y="6" width="1.15" height="1.15" fill="#111"/><rect x="0" y="8" width="1.15" height="1.15" fill="#111"/><rect x="8" y="8" width="1.15" height="1.15" fill="#111"/><rect x="16" y="8" width="1.15" height="1.15" fill="#111"/><rect x="0" y="10" width="1.15" height="1.15" fill="#111"/><rect x="8" y="10" width="1.15" height="1.15" fill="#111"/><rect x="16" y="10" width="1.15" height="1.15" fill="#111"/><rect x="0" y="12" width="1.15" height="1.15" fill="#111"/><rect x="8" y="12" width="1.15" height="1.15" fill="#111"/><rect x="16" y="12" width="1.15" height="1.15" fill="#111"/><rect x="0" y="14" width="1.15" height="1.15" fill="#111"/><rect x="8" y="14" width="1.15" height="1.15" fill="#111"/><rect x="16" y="14" width="1.15" height="1.15" fill="#111"/><rect x="0" y="15.4" width="17" height="1.4" fill="#222"/></svg>
<svg style="left:448.9px;top:531.1px;" width="11.4" height="7" viewBox="0 0 11.4 7"><polyline points="1,1 5.7,6 10.4,1" fill="none" stroke="#333" stroke-width="1.2" stroke-linecap="round" stroke-linejoin="round"/></svg>
<svg style="left:469.6px;top:522px;" width="20" height="18" viewBox="0 0 20 18"><path d="M8.3 5 L2.5 10.8 L8.2 16.2 L14.8 9.4 Z" fill="none" stroke="#333" stroke-width="1.15" stroke-linejoin="round"/><path d="M8.3 7.4 V3.6 a1.4 1.4 0 0 1 2.8 0 V8.6" fill="none" stroke="#333" stroke-width="1.1"/><path d="M13 6.8 C16.2 6.6 17.4 10 16.8 14.2 C16.2 11.8 15.6 10.6 14.2 9.2 Z" fill="#1e6fc8" stroke="#1e6fc8" stroke-width="0.7" stroke-linejoin="round"/></svg>
<div style="left:469.2px;top:539.2px;width:19.6px;height:4.4px;background:#fff22e"></div>
<svg style="left:492.9px;top:531.1px;" width="11.4" height="7" viewBox="0 0 11.4 7"><polyline points="1,1 5.7,6 10.4,1" fill="none" stroke="#333" stroke-width="1.2" stroke-linecap="round" stroke-linejoin="round"/></svg>
<span class="t" style="left:517.16px;top:522px;font-size:17.8px;line-height:20px;color:#333;">A</span>
<div style="left:512.9px;top:539.2px;width:19.8px;height:4.4px;background:#ee0000"></div>
<svg style="left:536.7px;top:531.1px;" width="11.4" height="7" viewBox="0 0 11.4 7"><polyline points="1,1 5.7,6 10.4,1" fill="none" stroke="#333" stroke-width="1.2" stroke-linecap="round" stroke-linejoin="round"/></svg>
<svg style="left:555.7px;top:524.8px;" width="19" height="18" viewBox="0 0 19 18"><line x1="0" y1="0.6" x2="18.6" y2="0.6" stroke="#333" stroke-width="1.1"/><line x1="2.8" y1="4.5" x2="15.8" y2="4.5" stroke="#333" stroke-width="1.1"/><line x1="0" y1="8.4" x2="18.6" y2="8.4" stroke="#333" stroke-width="1.1"/><line x1="2.8" y1="12.3" x2="15.8" y2="12.3" stroke="#333" stroke-width="1.1"/><line x1="0" y1="16.2" x2="18.6" y2="16.2" stroke="#333" stroke-width="1.1"/></svg>
<span class="t" style="left:585.15px;top:523px;font-size:11.6px;line-height:12px;color:#333;transform:scaleX(1.1126);">ab</span>
<span class="t" style="left:585.50px;top:532px;font-size:11.6px;line-height:12px;color:#333;">c</span>
<svg style="left:592px;top:530px;" width="12" height="13" viewBox="0 0 12 13"><path d="M9.8 3.6 C10 7 8 9 2.6 9 M5.6 6 L2.4 9 L5.6 12" fill="none" stroke="#3385d2" stroke-width="1.1"/></svg>
<svg style="left:612px;top:524px;" width="12" height="10" viewBox="0 0 12 10"><path d="M1.4 4.8 H10 M4.8 1.4 L1.4 4.8 L4.8 8.2" fill="none" stroke="#3385d2" stroke-width="1.1"/></svg>
<span class="t" style="left:621.77px;top:523px;font-size:9.2px;line-height:10px;color:#333;transform:scaleX(1.1497);">.0</span>
<span class="t" style="left:614.73px;top:534px;font-size:9.2px;line-height:10px;color:#333;transform:scaleX(1.2378);">.00</span>
<span class="t" style="left:643.46px;top:523px;font-size:9.2px;line-height:10px;color:#333;transform:scaleX(1.1830);">.00</span>
<svg style="left:639px;top:534px;" width="12" height="10" viewBox="0 0 12 10"><path d="M1.2 4.7 H10 M6.6 1.3 L10 4.7 L6.6 8.1" fill="none" stroke="#3385d2" stroke-width="1.1"/></svg>
<span class="t" style="left:649.67px;top:534px;font-size:9.2px;line-height:10px;color:#333;transform:scaleX(1.1627);">.0</span>
<svg style="left:668px;top:523px;" width="20" height="19" viewBox="0 0 20 19"><path d="M1.2 8.8 L9.8 5 L13.6 12 L7 17 Z" fill="#fbe3c8" stroke="#e8812e" stroke-width="1.1" stroke-linejoin="round"/><path d="M2.4 9.6 L11.6 11 M4.6 12.6 L12.6 12" stroke="#e8812e" stroke-width="0.9"/><path d="M8.6 4.2 L11.4 2.8 L15.6 10.4 L13 12 Z M12.4 3.2 L15.4 1 L17.6 2.6 L15.6 6.2" fill="#fff" stroke="#333" stroke-width="1.1" stroke-linejoin="round"/></svg>
</body></html>
